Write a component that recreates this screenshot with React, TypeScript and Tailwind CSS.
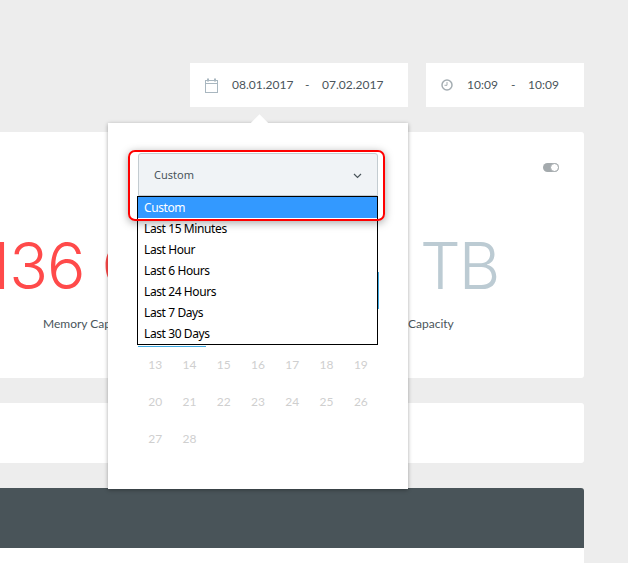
const rangeOptions = ['Last 15 Minutes', 'Last Hour', 'Last 6 Hours', 'Last 24 Hours', 'Last 7 Days', 'Last 30 Days'];
const days = [13, 14, 15, 16, 17, 18, 19, 20, 21, 22, 23, 24, 25, 26, 27, 28];

function CalendarIcon() {
  return (
    <svg width="13" height="15" viewBox="0 0 13 15" fill="none" stroke="#a9b7c0" strokeWidth="1">
      <rect x="0.5" y="2.5" width="12" height="12" />
      <path d="M0.5 5.5h12" />
      <path d="M3 0.5v3M10 0.5v3" strokeWidth="2" />
    </svg>
  );
}

function ClockIcon() {
  return (
    <svg width="12" height="12" viewBox="0 0 12 12" fill="none" stroke="#a4adb2" strokeWidth="1.5">
      <circle cx="6" cy="6" r="5" />
      <path d="M6 3v3.3H3.5" strokeWidth="1" />
    </svg>
  );
}

export default function App() {
  return (
    <div className="relative h-[563px] w-[628px] overflow-hidden bg-[#ededed] font-['Lato','Liberation_Sans',sans-serif]">
      <div className="flex w-[584px] flex-col pt-[63px]">
        <div className="flex justify-end gap-[18px] text-[12px] text-[#4a555b]">
          <div className="flex h-11 w-[218px] items-center bg-white pl-[15px]">
            <CalendarIcon />
            <span className="ml-[14px] w-[61px]">08.01.2017</span>
            <span className="ml-[12px] w-[4px]">-</span>
            <span className="ml-[13px]">07.02.2017</span>
          </div>
          <div className="flex h-11 w-[158px] items-center bg-white pl-[15px]">
            <ClockIcon />
            <span className="ml-[14px] w-[31px]">10:09</span>
            <span className="ml-[13px] w-[4px]">-</span>
            <span className="ml-[13px]">10:09</span>
          </div>
        </div>

        <div className="relative mt-[25px] h-[246px] rounded-r-[3px] bg-white">
          <div className="absolute left-[-15px] top-[94px] font-['Inter',sans-serif] text-[64px] leading-[80px] font-light tracking-[-1px] text-[#ff4a4a]">136 GB</div>
          <div className="absolute left-[43px] top-[184px] text-[12px] leading-4 text-[#4a555b]">Memory Capacity</div>
          <div className="absolute left-[420px] top-[94px] font-['Inter',sans-serif] text-[64px] leading-[80px] font-light tracking-[-2px] text-[#bccbd3]">TB</div>
          <div className="absolute left-[408px] top-[184px] text-[12px] leading-4 text-[#4a555b]">Capacity</div>
          <div className="absolute left-[543px] top-[31px] h-[9px] w-[16px] rounded-full bg-[#a4aaad]">
            <div className="ml-auto h-[9px] w-[9px] rounded-full border border-[#a4aaad] bg-white" />
          </div>
        </div>

        <div className="mt-[25px] h-[60px] rounded-r-[3px] bg-white" />

        <div className="mt-[25px] h-[60px] rounded-tr-[3px] bg-[#495459]" />
        <div className="h-[15px] bg-white" />
      </div>

      {/* date picker popover */}
      <div className="absolute left-[108px] top-[123px] h-[366px] w-[300px] bg-white shadow-[0_1px_4px_rgba(0,0,0,0.35)]">
        <div className="absolute left-[145px] top-[-6px] h-[13px] w-[13px] rotate-45 bg-white" />
        <div className="relative mx-[30px] mt-[30px] flex h-[43px] items-center justify-between rounded-t-[3px] border border-[#c4ccd1] bg-[#f0f3f6] px-[15px] pt-[2px] text-[11px] text-[#4a555b]">
          <span className="font-['Noto_Sans','Open_Sans',sans-serif]">Custom</span>
          <svg width="9" height="6" viewBox="0 0 9 6" fill="none" stroke="#4a555b" strokeWidth="1.2">
            <path d="M1 1l3.5 3.5L8 1" />
          </svg>
        </div>
        <div className="mt-[150px] ml-[30px] grid w-[240px] grid-cols-7 text-center text-[12px] leading-[37px] text-[#cfcfcf]">
          {days.map((day) => (
            <div key={day}>{day}</div>
          ))}
        </div>
      </div>

      {/* open select list */}
      <div className="absolute left-[137px] top-[196px] w-[241px] border border-black bg-white font-['Noto_Sans','Open_Sans',sans-serif] text-[12px] leading-[21px] tracking-[-0.4px] text-black">
        <div className="bg-[#3399ff] pl-[6px] text-white">Custom</div>
        {rangeOptions.map((option) => (
          <div key={option} className="pl-[6px]">
            {option}
          </div>
        ))}
        {/* leftover focus lines peeking out from behind the list */}
        <div className="absolute left-0 top-[148px] h-px w-[68px] translate-y-px bg-[#3fa9e0]" />
        <div className="absolute left-[240px] top-[75px] h-[37px] w-px bg-[#3fa9e0]" />
      </div>

      {/* red highlight */}
      <div className="absolute left-[128px] top-[150px] h-[71px] w-[257px] rounded-[7px] border-2 border-[#ff0000] shadow-[0_2px_8px_rgba(0,0,0,0.35)]" />
    </div>
  );
}
